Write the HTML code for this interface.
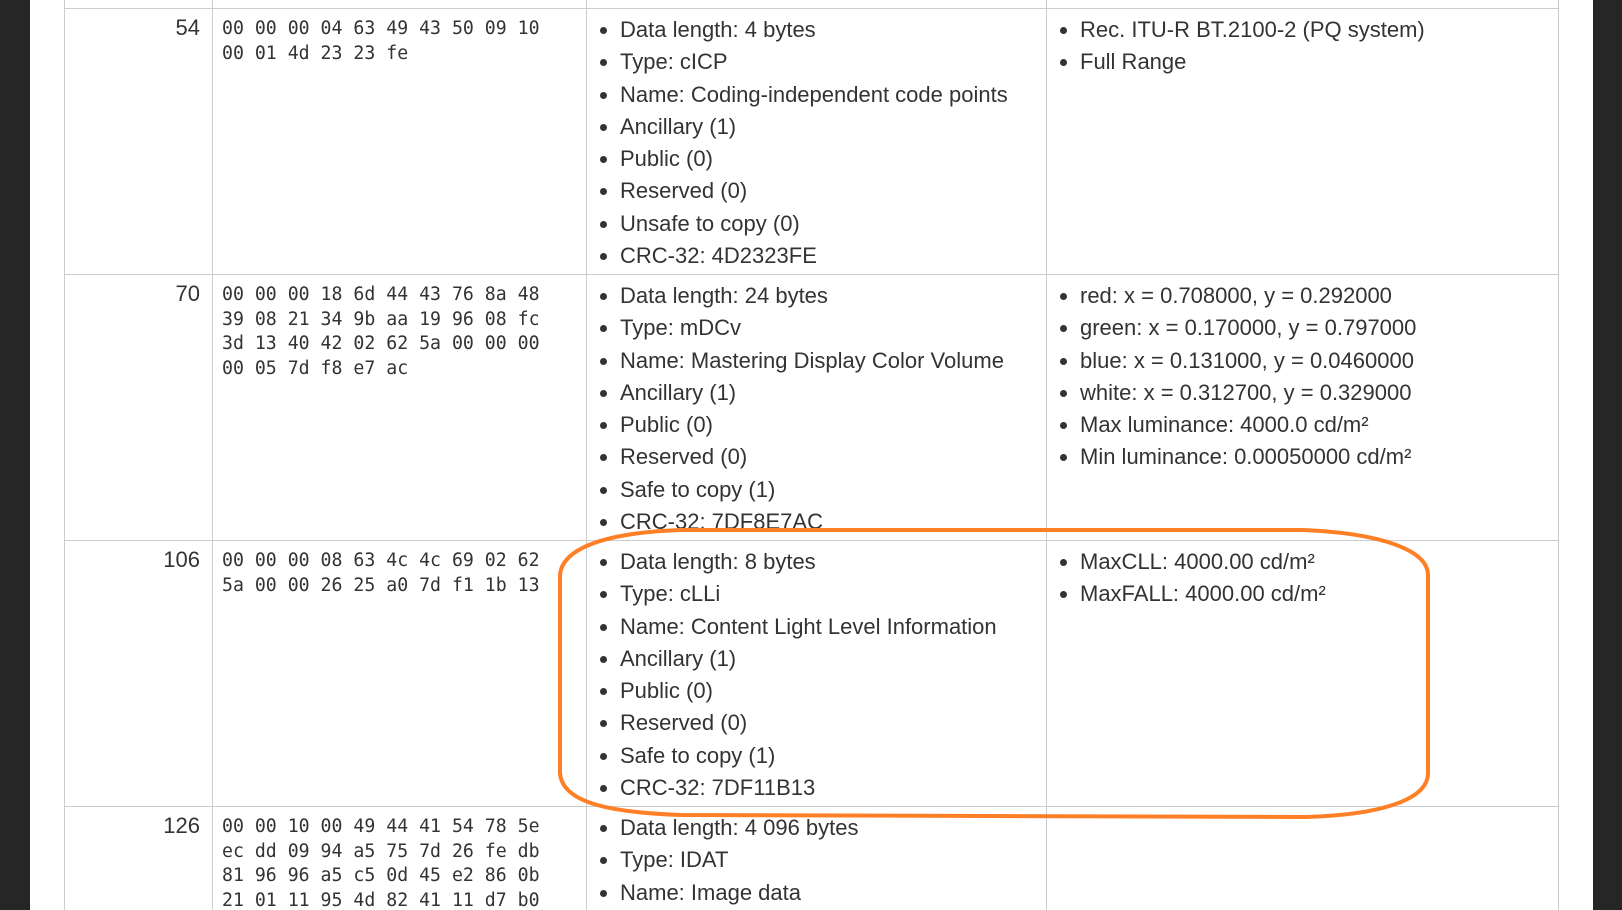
<!DOCTYPE html>
<html><head><meta charset="utf-8"><style>
html,body{margin:0;padding:0;width:1622px;height:910px;overflow:hidden;background:#fff;}
.wrap{position:absolute;left:0;top:0;width:1622px;height:910px;overflow:hidden;color:#333;font-family:"Liberation Sans",Arial,sans-serif;}
.l{position:absolute;left:0;top:0;width:30px;height:910px;background:#262626;}
.r{position:absolute;left:1593px;top:0;width:29px;height:910px;background:#262626;}
.v{position:absolute;top:0;width:1px;height:910px;background:#ccc;}
.hl{position:absolute;left:64px;width:1495px;height:1px;background:#ccc;}
.row{position:absolute;left:0;width:1622px;height:266px;}
.n{position:absolute;left:64px;width:136px;top:8px;text-align:right;font-size:22px;line-height:24px;}
.h{position:absolute;left:222px;top:9px;font-family:"DejaVu Sans Mono","Liberation Mono",monospace;font-size:18.2px;line-height:24.6px;white-space:pre;margin:0;}
ul{position:absolute;top:6px;margin:0;padding:0 0 0 34px;font-size:22px;line-height:32.3px;white-space:nowrap;}
ul.a{left:586px;} ul.b{left:1046px;}
li{margin:0;}
svg{position:absolute;left:0;top:0;}
</style></head><body>
<div class="wrap">
<div class="l"></div><div class="r"></div>
<div class="v" style="left:64px"></div><div class="v" style="left:212px"></div><div class="v" style="left:586px"></div><div class="v" style="left:1046px"></div><div class="v" style="left:1558px"></div>
<div class="hl" style="top:8px"></div><div class="hl" style="top:274px"></div><div class="hl" style="top:540px"></div><div class="hl" style="top:806px"></div>

<div class="row" style="top:8px">
<div class="n">54</div><pre class="h">00 00 00 04 63 49 43 50 09 10
00 01 4d 23 23 fe</pre>
<ul class="a"><li>Data length: 4 bytes</li><li>Type: cICP</li><li>Name: Coding-independent code points</li><li>Ancillary (1)</li><li>Public (0)</li><li>Reserved (0)</li><li>Unsafe to copy (0)</li><li>CRC-32: 4D2323FE</li></ul>
<ul class="b"><li>Rec. ITU-R BT.2100-2 (PQ system)</li><li>Full Range</li></ul>
</div>

<div class="row" style="top:274px">
<div class="n">70</div><pre class="h">00 00 00 18 6d 44 43 76 8a 48
39 08 21 34 9b aa 19 96 08 fc
3d 13 40 42 02 62 5a 00 00 00
00 05 7d f8 e7 ac</pre>
<ul class="a"><li>Data length: 24 bytes</li><li>Type: mDCv</li><li>Name: Mastering Display Color Volume</li><li>Ancillary (1)</li><li>Public (0)</li><li>Reserved (0)</li><li>Safe to copy (1)</li><li>CRC-32: 7DF8E7AC</li></ul>
<ul class="b"><li>red: x = 0.708000, y = 0.292000</li><li>green: x = 0.170000, y = 0.797000</li><li>blue: x = 0.131000, y = 0.0460000</li><li>white: x = 0.312700, y = 0.329000</li><li>Max luminance: 4000.0 cd/m²</li><li>Min luminance: 0.00050000 cd/m²</li></ul>
</div>

<div class="row" style="top:540px">
<div class="n">106</div><pre class="h">00 00 00 08 63 4c 4c 69 02 62
5a 00 00 26 25 a0 7d f1 1b 13</pre>
<ul class="a"><li>Data length: 8 bytes</li><li>Type: cLLi</li><li>Name: Content Light Level Information</li><li>Ancillary (1)</li><li>Public (0)</li><li>Reserved (0)</li><li>Safe to copy (1)</li><li>CRC-32: 7DF11B13</li></ul>
<ul class="b"><li>MaxCLL: 4000.00 cd/m²</li><li>MaxFALL: 4000.00 cd/m²</li></ul>
</div>

<div class="row" style="top:806px">
<div class="n">126</div><pre class="h">00 00 10 00 49 44 41 54 78 5e
ec dd 09 94 a5 75 7d 26 fe db
81 96 96 a5 c5 0d 45 e2 86 0b
21 01 11 95 4d 82 41 11 d7 b0</pre>
<ul class="a"><li>Data length: 4 096 bytes</li><li>Type: IDAT</li><li>Name: Image data</li><li>Ancillary (0)</li></ul>
</div>

<svg width="1622" height="910"><path d="M680 530 L1303 530 C1380 533 1428 550 1428 575 L1428 773 C1428 800 1380 815 1305 817 L680 815 C600 812 562 800 560 773 L560 575 C562 550 600 533 680 530 Z" fill="none" stroke="#ff7f27" stroke-width="4"/></svg>
</div>
</body></html>
